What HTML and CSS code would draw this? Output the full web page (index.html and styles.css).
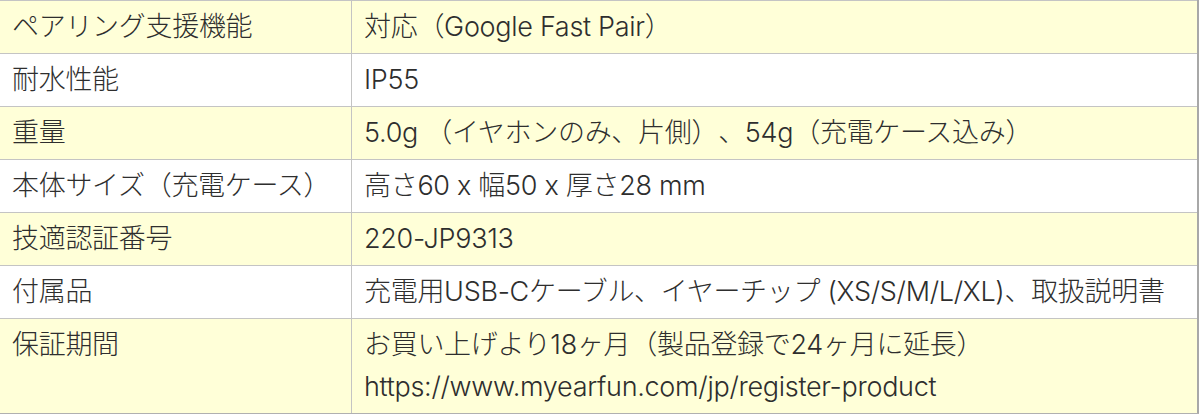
FILE: index.html
```html
<!DOCTYPE html>
<html lang="ja">
<head>
<meta charset="utf-8">
<link rel="stylesheet" href="styles.css">
</head>
<body>
<table class="spec">
  <tr class="alt"><th>ペアリング支援機能</th><td>対応（Google Fast Pair）</td></tr>
  <tr><th>耐水性能</th><td>IP55</td></tr>
  <tr class="alt"><th>重量</th><td>5.0g （イヤホンのみ、片側）、54g（充電ケース込み）</td></tr>
  <tr><th>本体サイズ（充電ケース）</th><td>高さ60 x 幅50 x 厚さ28 mm</td></tr>
  <tr class="alt"><th>技適認証番号</th><td>220-JP9313</td></tr>
  <tr><th>付属品</th><td>充電用USB-Cケーブル、イヤーチップ (XS/S/M/L/XL)、取扱説明書</td></tr>
  <tr class="alt"><th>保証期間</th><td>お買い上げより18ヶ月（製品登録で24ヶ月に延長）<br>https://www.myearfun.com/jp/register-product</td></tr>
</table>
</body>
</html>
```
FILE: styles.css
```css
html, body {
  margin: 0;
  padding: 0;
  background: #fff;
}
.spec {
  width: 1199px;
  border-collapse: collapse;
  font-family: "Inter", "Noto Sans CJK JP", sans-serif;
  font-size: 27px;
  letter-spacing: -0.3px;
  line-height: 42px;
  color: #2e2e2e;
  text-spacing-trim: space-all;
  border-top: 1px solid #bdbdbd;
  border-right: 2px solid #a8a8a8;
  border-bottom: 2px solid #b0b0b0;
}
.spec th,
.spec td {
  text-align: left;
  font-weight: 300;
  vertical-align: top;
  padding: 5px 12px 5px 12px;
  border-top: 1px solid #c4c4c4;
  white-space: nowrap;
}
.spec th {
  width: 327px;
  padding-left: 12px;
  border-right: 1px solid #c4c4c4;
}
.spec tr.alt {
  background: #ffffd8;
}
```
